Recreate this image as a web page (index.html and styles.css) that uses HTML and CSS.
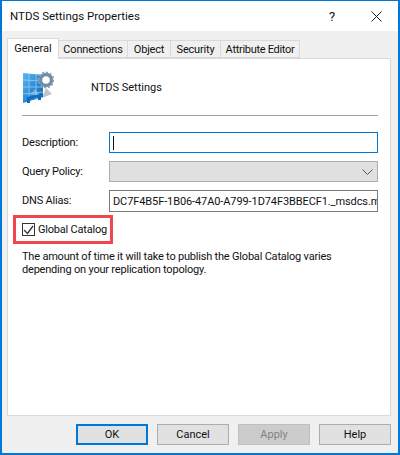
FILE: index.html
```html
<!DOCTYPE html>
<html lang="en">
<head>
  <meta charset="UTF-8" />
  <title>NTDS Settings Properties</title>
  <link rel="stylesheet" href="styles.css">
</head>
<body>
  <div class="window">
    <div class="titlebar">
      <span class="title">NTDS Settings Properties</span>
      <span class="help-btn">?</span>
      <svg class="close-btn" width="11" height="11" viewBox="0 0 11 11"><path d="M.5.5l10 10M10.500.5l-10 10" stroke="#222" fill="none"/></svg>
    </div>
    <div class="body">
      <div class="tabs">
        <div class="tab active">General</div>
        <div class="tab tab-conn">Connections</div>
        <div class="tab tab-obj">Object</div>
        <div class="tab tab-sec">Security</div>
        <div class="tab tab-attr">Attribute Editor</div>
      </div>
      <div class="panel">
        <div class="head">
          <svg class="logo" width="32" height="33" viewBox="0 0 32 33">
            <defs>
              <linearGradient id="glass" x1="0" y1="0" x2="1" y2="1">
                <stop offset="0" stop-color="#5cb8f0"/>
                <stop offset="1" stop-color="#0a5fb4"/>
              </linearGradient>
            </defs>
            <path d="M20 27l10-4-6-6z" fill="#c4c4c4"/>
            <path d="M1 2l20 2v22l-20 6z" fill="url(#glass)"/>
            <path d="M7 3v27M14 4v25M1 9l20 1M1 16l20 0M1 23l20-2" stroke="#8fd2f6" stroke-width=".8" fill="none"/>
            <path d="M8 24l5-6 5 6z" fill="#a9cde6" opacity=".6"/>
            <path d="M5 32v-6l14-3v6h-3v-3l-8 2v4z" fill="#0b6cc4"/>
            <circle cx="24" cy="9" r="5.500" fill="#fff" stroke="#6f8ea8" stroke-width="3.500"/>
            <circle cx="24" cy="9" r="7.500" fill="none" stroke="#8aa2b6" stroke-width="1.800" stroke-dasharray="2 1.900"/>
          </svg>
          <span class="head-name">NTDS Settings</span>
        </div>
        <div class="sep"></div>
        <div class="form">
          <label class="lbl">Description:</label>
          <div class="field focus"><span class="caret"></span></div>
          <label class="lbl">Query Policy:</label>
          <div class="field disabled">
            <svg width="11" height="6" viewBox="0 0 11 6"><path d="M.5.5l5 5 5-5" stroke="#555" fill="none"/></svg>
          </div>
          <label class="lbl">DNS Alias:</label>
          <div class="field plain"><span class="val">DC7F4B5F-1B06-47A0-A799-1D74F3BBECF1._msdcs.mydomain.local</span></div>
        </div>
        <div class="catalog">
          <span class="check">
            <svg width="11" height="10" viewBox="0 0 11 10"><path d="M1 5l3.500 3.500L10 1" stroke="#333" stroke-width="1.300" fill="none"/></svg>
          </span>
          <span>Global Catalog</span>
        </div>
        <p class="note">The amount of time it will take to publish the Global Catalog varies depending on your replication topology.</p>
      </div>
      <div class="buttons">
        <button class="btn default">OK</button>
        <button class="btn">Cancel</button>
        <button class="btn off">Apply</button>
        <button class="btn">Help</button>
      </div>
    </div>
  </div>
</body>
</html>
```
FILE: styles.css
```css
html, body {
  margin: 0;
  padding: 0;
}
body {
  width: 400px;
  height: 455px;
  overflow: hidden;
  font-family: Roboto, Arial, sans-serif;
  font-size: 11px;
  letter-spacing: -0.2px;
  color: #111;
}
.window {
  box-sizing: border-box;
  width: 400px;
  height: 455px;
  border: 1px solid #0078d7;
  border-width: 1px 2px 2px 2px;
  background: #f0f0f0;
  display: flex;
  flex-direction: column;
}
.titlebar {
  height: 30px;
  background: white;
  display: flex;
  align-items: center;
  flex-shrink: 0;
}
.title {
  margin-left: 8px;
  font-size: 11.500px;
  letter-spacing: 0;
  flex: 1;
}
.help-btn {
  font-size: 13px;
  margin-right: 36px;
}
.close-btn {
  margin-right: 16px;
}
.body {
  flex: 1;
  display: flex;
  flex-direction: column;
  padding: 7px 7px 0 5px;
}
.tabs {
  display: flex;
  height: 20px;
  align-items: flex-end;
  position: relative;
  z-index: 1;
}
.tab {
  box-sizing: border-box;
  height: 18px;
  line-height: 18px;
  text-align: center;
  white-space: nowrap;
  background: #f0f0f0;
  border: 1px solid #d9d9d9;
  border-left: 0;
}
.tab.active {
  width: 52px;
  height: 21px;
  margin-bottom: -1px;
  background: white;
  border-left: 1px solid #d9d9d9;
  border-bottom: 0;
  line-height: 19px;
  letter-spacing: 0;
}
.tab-conn { width: 69px; }
.tab-obj { width: 43px; }
.tab-sec { width: 50px; }
.tab-attr { width: 79px; letter-spacing: -0.3px; }
.panel {
  box-sizing: border-box;
  width: 384px;
  height: 358px;
  background: white;
  border: 1px solid #d9d9d9;
  padding: 0 12px 0 14px;
}
.head {
  display: flex;
  align-items: center;
  height: 56px;
}
.logo {
  flex-shrink: 0;
}
.head-name {
  margin-left: 37px;
  letter-spacing: 0;
}
.sep {
  height: 1px;
  background: #a0a0a0;
}
.form {
  display: grid;
  grid-template-columns: 87px 269px;
  grid-template-rows: 21px 21px 22px;
  row-gap: 8px;
  margin-top: 16px;
  align-items: center;
}
.lbl {
  height: 100%;
  line-height: 21px;
}
.field {
  box-sizing: border-box;
  height: 100%;
  border: 1px solid #7a7a7a;
  background: white;
  display: flex;
  align-items: center;
  padding: 0 3px;
  overflow: hidden;
  white-space: nowrap;
}
.field.focus {
  border-color: #0078d7;
}
.caret {
  width: 1px;
  height: 14px;
  background: #111;
}
.field.disabled {
  background: #e0e0e0;
  border-color: #adadad;
  justify-content: flex-end;
  padding-right: 4px;
}
.val {
  letter-spacing: -0.1px;
}
.catalog {
  box-sizing: border-box;
  width: 100px;
  height: 29px;
  border: 3px solid #f0474f;
  margin: 3px 0 0 -9px;
  display: flex;
  align-items: center;
  padding-left: 6px;
  gap: 3px;
  white-space: nowrap;
}
.check {
  box-sizing: border-box;
  width: 13px;
  height: 13px;
  border: 1px solid #333;
  background: white;
  display: flex;
  align-items: center;
  justify-content: center;
}
.note {
  margin: 6px 0 0 0;
  width: 330px;
  line-height: 13px;
}
.buttons {
  display: flex;
  gap: 9px;
  justify-content: flex-end;
  margin-top: 8px;
}
.btn {
  box-sizing: border-box;
  width: 72px;
  height: 21px;
  background: #e1e1e1;
  border: 1px solid #adadad;
  font-family: inherit;
  font-size: 11px;
  color: #111;
  padding: 0;
}
.btn.default {
  border: 2px solid #0078d7;
}
.btn.off {
  background: #cccccc;
  border-color: #bfbfbf;
  color: #838383;
}
```
